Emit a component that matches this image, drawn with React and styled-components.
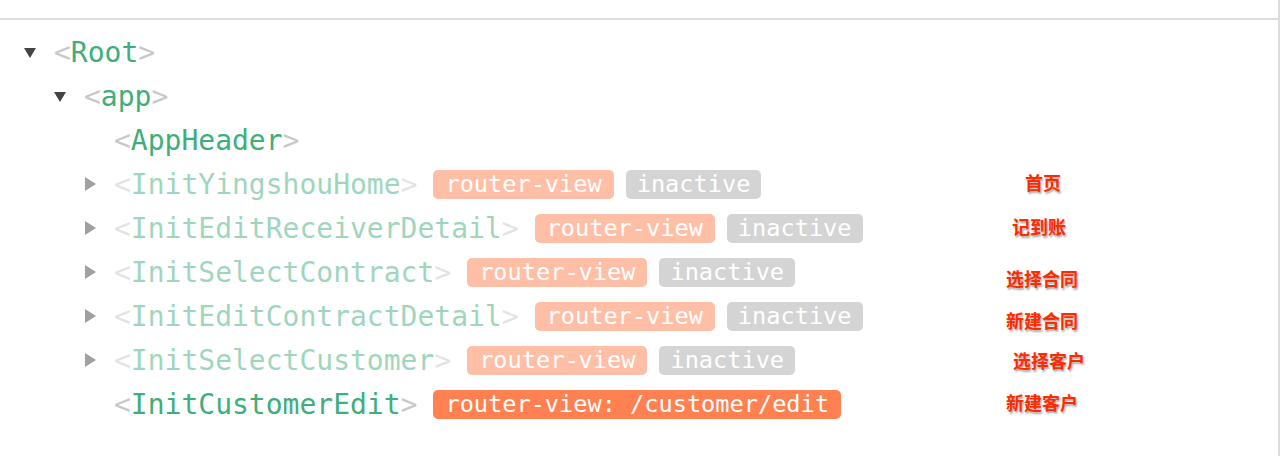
import React from "react";
import styled, { createGlobalStyle } from "styled-components";

const GlobalStyle = createGlobalStyle`
  html, body {
    margin: 0;
    padding: 0;
    background: #fff;
  }
`;

const Page = styled.div`
  display: flex;
  width: 1288px;
  height: 456px;
  overflow: hidden;
  background: #fff;
`;

const Panel = styled.div`
  width: 1278px;
  display: flex;
  flex-direction: column;
`;

const TopBar = styled.div`
  height: 18px;
  border-bottom: 2px solid #dddddd;
`;

const Divider = styled.div`
  width: 2px;
  background: #dddddd;
`;

const Tree = styled.div`
  padding-top: 10px;
  display: flex;
  flex-direction: column;
`;

const Row = styled.div`
  display: grid;
  grid-template-columns: 1006px 1fr;
  align-items: center;
  height: 44px;
`;

const Node = styled.div`
  display: flex;
  align-items: center;
  padding-left: ${(p) => 24 + p.depth * 30}px;
  opacity: ${(p) => (p.inactive ? 0.5 : 1)};
  font-family: "DejaVu Sans Mono", "Liberation Mono", monospace;
  font-size: 28px;
  white-space: nowrap;
`;

const Arrow = styled.span`
  width: 30px;
  flex: none;
  display: flex;
  align-items: center;

  &::before {
    content: "";
    display: ${(p) => (p.type ? "block" : "none")};
    width: 0;
    height: 0;
    ${(p) =>
      p.type === "open"
        ? `
      border-left: 6px solid transparent;
      border-right: 6px solid transparent;
      border-top: 10px solid #444;
      margin-top: 2px;
    `
        : `
      margin-left: 1px;
      border-top: 7px solid transparent;
      border-bottom: 7px solid transparent;
      border-left: 11px solid #444;
    `}
  }
`;

const Bracket = styled.span`
  color: #c8c8c8;
`;

const TagName = styled.span`
  color: #3fae7b;
`;

const Badges = styled.span`
  display: flex;
  gap: 12px;
  margin-left: 16px;
`;

const Badge = styled.span`
  display: inline-block;
  height: 29px;
  line-height: 29px;
  padding: 0 ${(p) => (p.kind === "inactive" ? 11 : 12)}px;
  border-radius: 5px;
  font-size: 23.6px;
  color: #fff;
  background: ${(p) => (p.kind === "inactive" ? "#ababab" : "#ff8050")};
`;

const Note = styled.span`
  justify-self: start;
  margin-left: ${(p) => p.dx || 0}px;
  transform: translateY(${(p) => p.dy || 0}px);
  font-family: "Noto Sans CJK SC", "Noto Sans", sans-serif;
  font-weight: 700;
  font-size: 18px;
  color: #ff2a00;
  text-shadow: 1px 2px 2px rgba(0, 0, 0, 0.35);
`;

const nodes = [
  { name: "Root", depth: 0, arrow: "open" },
  { name: "app", depth: 1, arrow: "open" },
  { name: "AppHeader", depth: 2 },
  { name: "InitYingshouHome", depth: 2, arrow: "closed", inactive: true, badges: ["router-view", "inactive"], note: "首页", dx: 19, dy: -2 },
  { name: "InitEditReceiverDetail", depth: 2, arrow: "closed", inactive: true, badges: ["router-view", "inactive"], note: "记到账", dx: 6, dy: -2 },
  { name: "InitSelectContract", depth: 2, arrow: "closed", inactive: true, badges: ["router-view", "inactive"], note: "选择合同", dx: 0, dy: 6 },
  { name: "InitEditContractDetail", depth: 2, arrow: "closed", inactive: true, badges: ["router-view", "inactive"], note: "新建合同", dx: 0, dy: 4 },
  { name: "InitSelectCustomer", depth: 2, arrow: "closed", inactive: true, badges: ["router-view", "inactive"], note: "选择客户", dx: 7, dy: 0 },
  { name: "InitCustomerEdit", depth: 2, badges: ["router-view: /customer/edit"], note: "新建客户", dx: 0, dy: -2 },
];

export default function App() {
  return (
    <>
      <GlobalStyle />
      <Page>
        <Panel>
          <TopBar />
          <Tree>
            {nodes.map((n) => (
              <Row key={n.name}>
                <Node depth={n.depth} inactive={n.inactive}>
                  <Arrow type={n.arrow} />
                  <Bracket>&lt;</Bracket>
                  <TagName>{n.name}</TagName>
                  <Bracket>&gt;</Bracket>
                  {n.badges && (
                    <Badges>
                      {n.badges.map((b) => (
                        <Badge key={b} kind={b === "inactive" ? "inactive" : "router"}>
                          {b}
                        </Badge>
                      ))}
                    </Badges>
                  )}
                </Node>
                {n.note ? (
                  <Note dx={n.dx} dy={n.dy}>
                    {n.note}
                  </Note>
                ) : (
                  <span />
                )}
              </Row>
            ))}
          </Tree>
        </Panel>
        <Divider />
      </Page>
    </>
  );
}
